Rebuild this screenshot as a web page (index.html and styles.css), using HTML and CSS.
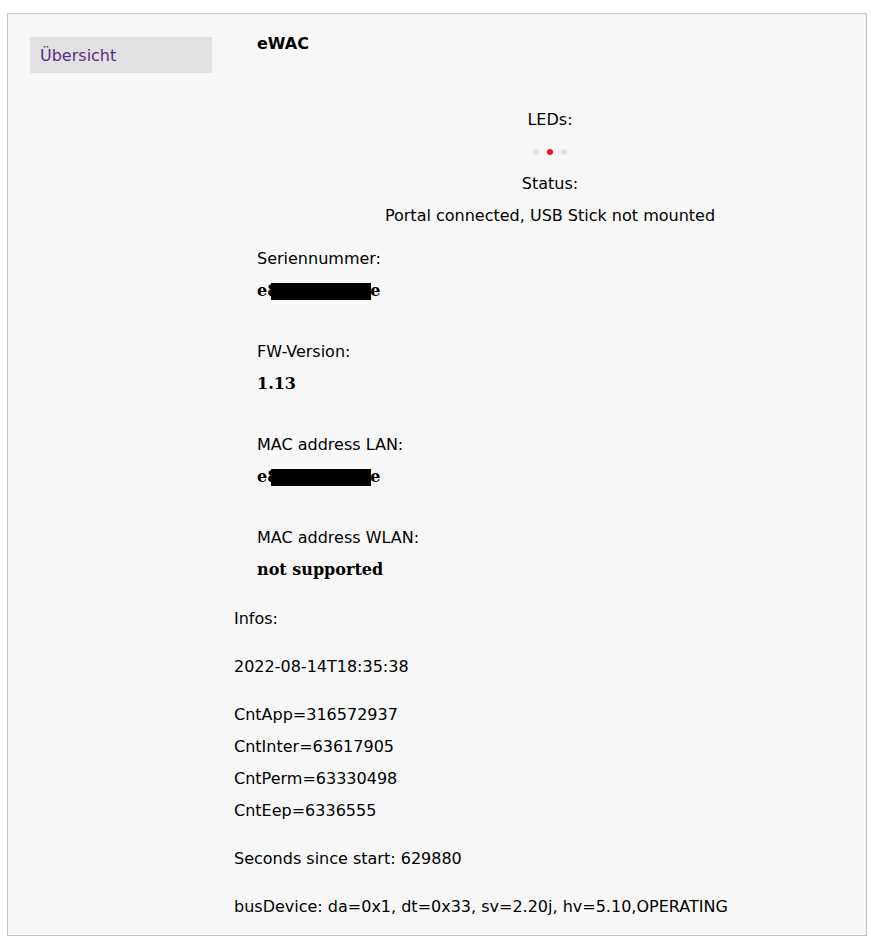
FILE: index.html
```html
<!DOCTYPE html>
<html lang="de">
<head>
    <meta charset="UTF-8">
    <meta name="viewport" content="width=device-width, initial-scale=1.0">
    <title>eWAC</title>
    <link rel="stylesheet" href="styles.css">
</head>
<body>
    <div class="container">
        <!-- Navigation -->
        <div class="sidebar">
            <a class="nav-item" href="#">Übersicht</a>
        </div>

        <!-- Inhalt -->
        <div class="main">
            <div class="title">eWAC</div>

            <div class="center">
                <div class="line">LEDs:</div>
                <div class="leds">
                    <span class="led"></span>
                    <span class="led on"></span>
                    <span class="led"></span>
                </div>
                <div class="line">Status:</div>
                <div class="line">Portal connected, USB Stick not mounted</div>
            </div>

            <div class="field">
                <div class="line">Seriennummer:</div>
                <div class="value">e8<span class="redact"></span>e</div>
            </div>
            <div class="field">
                <div class="line">FW-Version:</div>
                <div class="value">1.13</div>
            </div>
            <div class="field">
                <div class="line">MAC address LAN:</div>
                <div class="value">e8<span class="redact"></span>e</div>
            </div>
            <div class="field last">
                <div class="line">MAC address WLAN:</div>
                <div class="value">not supported</div>
            </div>

            <div class="infos">
                <p>Infos:</p>
                <p>2022-08-14T18:35:38</p>
                <p>CntApp=316572937<br>CntInter=63617905<br>CntPerm=63330498<br>CntEep=6336555</p>
                <p>Seconds since start: 629880</p>
                <p>busDevice: da=0x1, dt=0x33, sv=2.20j, hv=5.10,OPERATING</p>
            </div>
        </div>
    </div>
</body>
</html>
```

FILE: styles.css
```css
body {
    font-family: 'DejaVu Sans', Verdana, sans-serif;
    font-size: 16px;
    color: #000;
    background: #fff;
    margin: 0;
    padding: 0;
}
.container {
    display: flex;
    margin: 13px 4px 6px 7px;
    padding: 14px 0 12px;
    background: #f7f7f7;
    border: 1px solid #c3c3c3;
}
.sidebar {
    width: 182px;
    padding: 9px 0 0 22px;
    flex-shrink: 0;
}
.nav-item {
    display: block;
    height: 36px;
    line-height: 38px;
    padding-left: 10px;
    background: #e1e1e1;
    color: #5b2a86;
    text-decoration: none;
}
.main {
    flex: 1;
    margin-left: 22px;
    line-height: 32px;
}
.title {
    padding-left: 23px;
    font-weight: bold;
    margin-bottom: 44px;
}
.center {
    text-align: center;
    margin-bottom: 11px;
}
.leds {
    display: flex;
    justify-content: center;
    align-items: center;
    gap: 8px;
    height: 32px;
}
.led {
    width: 6px;
    height: 6px;
    border-radius: 50%;
    background: #e0e0e0;
}
.led.on {
    background: #f50f1e;
}
.field {
    padding-left: 23px;
    margin-bottom: 29px;
}
.field.last {
    margin-bottom: 17px;
}
.value {
    font-family: 'DejaVu Serif', Georgia, serif;
    font-weight: bold;
}
.redact {
    display: inline-block;
    width: 100px;
    height: 17px;
    margin-left: -7px;
    margin-right: -1px;
    vertical-align: -4px;
    background: #000;
}
.infos p {
    margin: 0 0 16px 0;
}
.infos p:last-child {
    margin-bottom: 0;
}
```
